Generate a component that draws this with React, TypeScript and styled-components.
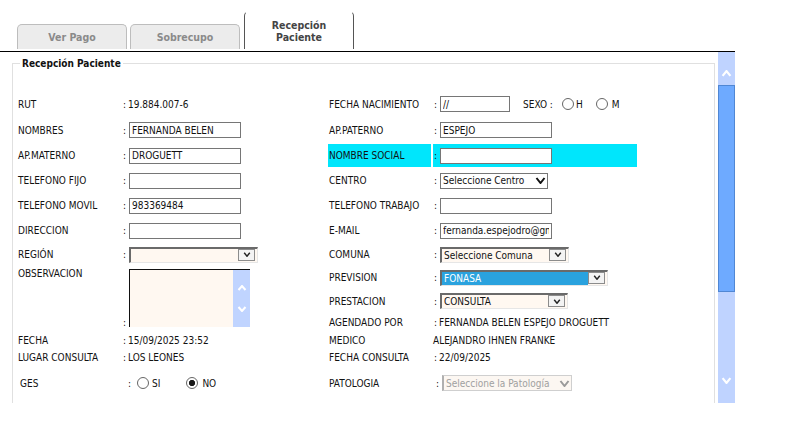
import React from 'react';
import styled, { createGlobalStyle } from 'styled-components';

const GlobalStyle = createGlobalStyle`
  html, body { margin: 0; padding: 0; background: #fff; }
  body {
    font-family: "DejaVu Sans Condensed", "DejaVu Sans", sans-serif;
    font-stretch: condensed;
    font-size: 10px;
    color: #111;
  }
`;

type SelectVariant = 'plain' | 'inset' | 'disabled';

const Chevron: React.FC<{ w: number; h: number; color: string; sw: number }> = ({ w, h, color, sw }) => (
  <svg width={w} height={h} viewBox={`0 0 ${w} ${h}`}>
    <polyline
      points={`${sw / 2 + 0.5},${sw / 2} ${w / 2},${h - sw / 2} ${w - sw / 2 - 0.5},${sw / 2}`}
      fill="none"
      stroke={color}
      strokeWidth={sw}
    />
  </svg>
);

const ChevronUp: React.FC<{ w: number; h: number; color: string; sw: number }> = ({ w, h, color, sw }) => (
  <svg width={w} height={h} viewBox={`0 0 ${w} ${h}`}>
    <polyline
      points={`${sw / 2 + 0.5},${h - sw / 2} ${w / 2},${sw / 2} ${w - sw / 2 - 0.5},${h - sw / 2}`}
      fill="none"
      stroke={color}
      strokeWidth={sw}
    />
  </svg>
);

const Select: React.FC<{ w: number; variant: SelectVariant; text?: string; selected?: boolean }> = ({
  w,
  variant,
  text,
  selected,
}) => (
  <SelectFrame $w={w} $variant={variant}>
    <SelectText $selected={selected}>{text}</SelectText>
    {variant === 'inset' ? (
      <ArrowBox>
        <Chevron w={8} h={5} color="#222" sw={1.4} />
      </ArrowBox>
    ) : (
      <ArrowPlain>
        <Chevron w={11} h={7} color={variant === 'disabled' ? '#9a9a9a' : '#111'} sw={2} />
      </ArrowPlain>
    )}
  </SelectFrame>
);

const App: React.FC = () => {
  return (
    <>
      <GlobalStyle />
      <Page>
        <TabBar>
          <Tab>Ver Pago</Tab>
          <Tab>Sobrecupo</Tab>
          <ActiveTab>
            Recepción
            <br />
            Paciente
          </ActiveTab>
        </TabBar>

        <Body>
          <ContentPane>
            <Fieldset>
              <Legend>Recepción Paciente</Legend>
              <FormGrid>
                <Label>RUT</Label>
                <Value>
                  <Colon $w={6}>:</Colon>19.884.007-6
                </Value>
                <Label $indent={1}>FECHA NACIMIENTO</Label>
                <Value>
                  <Colon>:</Colon>
                  <TextInput $w={70} defaultValue="//" />
                  <SexoGroup>
                    SEXO :
                    <Radio name="sexo" $gap={9} />
                    <RadioText>H</RadioText>
                    <Radio name="sexo" $gap={13} />
                    <RadioText $gap={4}>M</RadioText>
                  </SexoGroup>
                </Value>

                <Label>NOMBRES</Label>
                <Value>
                  <Colon>:</Colon>
                  <TextInput $w={112} defaultValue="FERNANDA BELEN" />
                </Value>
                <Label $indent={1}>AP.PATERNO</Label>
                <Value>
                  <Colon>:</Colon>
                  <TextInput $w={112} defaultValue="ESPEJO" />
                </Value>

                <Label>AP.MATERNO</Label>
                <Value>
                  <Colon>:</Colon>
                  <TextInput $w={112} defaultValue="DROGUETT" />
                </Value>
                <Label $indent={1} $hl>
                  NOMBRE SOCIAL
                </Label>
                <Value $hl>
                  <Colon>:</Colon>
                  <TextInput $w={112} defaultValue="" />
                </Value>

                <Label>TELEFONO FIJO</Label>
                <Value>
                  <Colon>:</Colon>
                  <TextInput $w={112} defaultValue="" />
                </Value>
                <Label $indent={1}>CENTRO</Label>
                <Value>
                  <Colon>:</Colon>
                  <Select w={108} variant="plain" text="Seleccione Centro" />
                </Value>

                <Label>TELEFONO MOVIL</Label>
                <Value>
                  <Colon>:</Colon>
                  <TextInput $w={112} defaultValue="983369484" />
                </Value>
                <Label $indent={1}>TELEFONO TRABAJO</Label>
                <Value>
                  <Colon>:</Colon>
                  <TextInput $w={112} defaultValue="" />
                </Value>

                <Label>DIRECCION</Label>
                <Value>
                  <Colon>:</Colon>
                  <TextInput $w={112} defaultValue="" />
                </Value>
                <Label $indent={1}>E-MAIL</Label>
                <Value>
                  <Colon>:</Colon>
                  <TextInput $w={112} defaultValue="fernanda.espejodro@gmail.com" />
                </Value>

                <Label>REGIÓN</Label>
                <Value>
                  <Colon>:</Colon>
                  <Select w={129} variant="inset" text="" />
                </Value>
                <Label $indent={1}>COMUNA</Label>
                <Value>
                  <Colon>:</Colon>
                  <Select w={129} variant="inset" text="Seleccione Comuna" />
                </Value>

                <Label $span={3} $top>
                  OBSERVACION
                </Label>
                <Value $span={3} $top>
                  <Colon $bottom>:</Colon>
                  <Memo>
                    <MemoArea />
                    <MemoBar>
                      <ChevronUp w={10} h={6} color="#fff" sw={2} />
                      <Chevron w={10} h={6} color="#fff" sw={2} />
                    </MemoBar>
                  </Memo>
                </Value>
                <Label $indent={1}>PREVISION</Label>
                <Value>
                  <Colon>:</Colon>
                  <Select w={168} variant="inset" text="FONASA" selected />
                </Value>

                <Label $indent={1}>PRESTACION</Label>
                <Value>
                  <Colon>:</Colon>
                  <Select w={128} variant="inset" text="CONSULTA" />
                </Value>

                <Label $indent={1}>AGENDADO POR</Label>
                <Value>
                  <Colon $w={6}>:</Colon>FERNANDA BELEN ESPEJO DROGUETT
                </Value>

                <Label>FECHA</Label>
                <Value>
                  <Colon $w={6}>:</Colon>15/09/2025 23:52
                </Value>
                <Label $indent={1}>MEDICO</Label>
                <Value>ALEJANDRO IHNEN FRANKE</Value>

                <Label>LUGAR CONSULTA</Label>
                <Value>
                  <Colon $w={6}>:</Colon>LOS LEONES
                </Value>
                <Label $indent={1}>FECHA CONSULTA</Label>
                <Value>
                  <Colon $w={6}>:</Colon>22/09/2025
                </Value>

                <Label $indent={2}>GES</Label>
                <Value $pad={5}>
                  <Colon $w={10}>:</Colon>
                  <Radio name="ges" />
                  <RadioText $gap={3}>SI</RadioText>
                  <Radio name="ges" $gap={26} defaultChecked />
                  <RadioText $gap={4}>NO</RadioText>
                </Value>
                <Label $indent={1}>PATOLOGIA</Label>
                <Value $pad={2}>
                  <Colon>:</Colon>
                  <Select w={130} variant="disabled" text="Seleccione la Patología" />
                </Value>
              </FormGrid>
            </Fieldset>
          </ContentPane>

          <ScrollBar>
            <ScrollEnd $down={false}>
              <ChevronUp w={11} h={7} color="#fff" sw={2.2} />
            </ScrollEnd>
            <ScrollThumb />
            <ScrollTrack />
            <ScrollEnd $down>
              <Chevron w={11} h={7} color="#fff" sw={2.2} />
            </ScrollEnd>
          </ScrollBar>
        </Body>
      </Page>
    </>
  );
};

export default App;

// --- styled components ---

const Page = styled.div`
  width: 735px;
`;

const TabBar = styled.div`
  display: flex;
  align-items: flex-end;
  gap: 3px;
  height: 49px;
  padding: 0 0 2px 17px;
  border-bottom: 1px solid #000;
`;

const Tab = styled.div`
  width: 110px;
  height: 25px;
  box-sizing: border-box;
  border: 1px solid #bdbdbd;
  border-bottom: none;
  border-radius: 5px 5px 0 0;
  background: #ececec;
  color: #8a8a8a;
  font-weight: bold;
  font-size: 10.5px;
  display: flex;
  align-items: center;
  justify-content: center;
`;

const ActiveTab = styled.div`
  width: 110px;
  height: 38px;
  margin-left: 1px;
  box-sizing: border-box;
  border: 1px solid #555;
  border-top-color: transparent;
  border-bottom: none;
  border-radius: 5px 5px 0 0;
  background: #fff;
  color: #444;
  font-weight: bold;
  font-size: 10.5px;
  line-height: 12px;
  text-align: center;
  padding-top: 7px;
`;

const Body = styled.div`
  display: flex;
  height: 351px;
`;

const ContentPane = styled.div`
  width: 718px;
  height: 100%;
  overflow: hidden;
`;

const Fieldset = styled.fieldset`
  margin: 6px 3px 0 12px;
  padding: 0 0 0 5px;
  border: 1px solid #e0e0e0;
  min-height: 420px;
`;

const Legend = styled.legend`
  font-weight: bold;
  padding: 0 2px;
  margin-left: 2px;
  color: #111;
`;

const FormGrid = styled.div`
  display: grid;
  grid-template-columns: 104px 206px 105px 204px;
  grid-template-rows: 26px 26px 25px 25px 25px 25px 23px 23px 24px 19px 17px 17px 34px;
  padding-top: 22px;
  white-space: nowrap;
`;

const Label = styled.div<{ $indent?: number; $hl?: boolean; $span?: number; $top?: boolean }>`
  display: flex;
  align-items: ${(p) => (p.$top ? 'flex-start' : 'center')};
  padding-left: ${(p) => p.$indent ?? 0}px;
  padding-top: ${(p) => (p.$top ? 2 : 0)}px;
  background: ${(p) => (p.$hl ? '#00e6fc' : 'transparent')};
  margin: ${(p) => (p.$hl ? '1px 2px 1px 0' : '0')};
  grid-row: ${(p) => (p.$span ? `span ${p.$span}` : 'auto')};
`;

const Value = styled.div<{ $hl?: boolean; $span?: number; $top?: boolean; $pad?: number }>`
  display: flex;
  align-items: ${(p) => (p.$top ? 'flex-start' : 'center')};
  padding-left: ${(p) => p.$pad ?? 0}px;
  background: ${(p) => (p.$hl ? '#00e6fc' : 'transparent')};
  margin: ${(p) => (p.$hl ? '1px 0' : '0')};
  grid-row: ${(p) => (p.$span ? `span ${p.$span}` : 'auto')};
`;

const Colon = styled.span<{ $w?: number; $bottom?: boolean }>`
  flex: none;
  width: ${(p) => p.$w ?? 7}px;
  padding-left: 1px;
  box-sizing: border-box;
  align-self: ${(p) => (p.$bottom ? 'flex-end' : 'auto')};
  margin-bottom: ${(p) => (p.$bottom ? 4 : 0)}px;
`;

const TextInput = styled.input<{ $w: number }>`
  width: ${(p) => p.$w}px;
  height: 16px;
  box-sizing: border-box;
  margin: 0;
  padding: 0 2px;
  border: 1px solid #767676;
  background: #fff;
  font: inherit;
  color: #111;
  outline: none;
`;

const SexoGroup = styled.div`
  display: flex;
  align-items: center;
  margin-left: 13px;
`;

const Radio = styled.input.attrs({ type: 'radio' })<{ $gap?: number }>`
  appearance: none;
  width: 12px;
  height: 12px;
  margin: 0 0 0 ${(p) => p.$gap ?? 0}px;
  border: 1px solid #666;
  border-radius: 50%;
  background: #fff;
  &:checked {
    background: radial-gradient(circle, #1a1a1a 0 2.8px, #fff 3.4px);
  }
`;

const RadioText = styled.span<{ $gap?: number }>`
  margin-left: ${(p) => p.$gap ?? 2}px;
`;

const SelectFrame = styled.div<{ $w: number; $variant: SelectVariant }>`
  width: ${(p) => p.$w}px;
  height: 16px;
  box-sizing: border-box;
  display: flex;
  align-items: stretch;
  ${(p) =>
    p.$variant === 'plain'
      ? `border: 1px solid #767676; background: #fff; color: #111;`
      : p.$variant === 'inset'
        ? `border-top: 2px solid #6a6a6a; border-left: 2px solid #6a6a6a;
           border-right: 1px solid #e6e6e6; border-bottom: 1px solid #e6e6e6;
           background: #fff8f1; color: #111;`
        : `border: 1px solid #cfcfcf; border-left: 2px solid #b0b0b0;
           background: #fcf7f2; color: #a0a0a0;`}
`;

const SelectText = styled.span<{ $selected?: boolean }>`
  flex: 1;
  min-width: 0;
  display: flex;
  align-items: center;
  padding-left: 2px;
  overflow: hidden;
  background: ${(p) => (p.$selected ? '#2aa2de' : 'transparent')};
  color: ${(p) => (p.$selected ? '#fff' : 'inherit')};
`;

const ArrowBox = styled.span`
  flex: none;
  width: 17px;
  margin: 0 2px 1px 0;
  box-sizing: border-box;
  border: 1px solid #8c8c8c;
  background: #f3f3f3;
  display: flex;
  align-items: center;
  justify-content: center;
`;

const ArrowPlain = styled.span`
  flex: none;
  width: 14px;
  display: flex;
  align-items: center;
  justify-content: center;
`;

const Memo = styled.div`
  width: 121px;
  height: 58px;
  margin-top: 3px;
  box-sizing: border-box;
  display: flex;
  border-top: 1px solid #111;
  border-left: 1px solid #111;
`;

const MemoArea = styled.div`
  flex: 1;
  background: #fff8f1;
`;

const MemoBar = styled.div`
  width: 17px;
  background: #c0d4ff;
  display: flex;
  flex-direction: column;
  align-items: center;
  justify-content: center;
  gap: 15px;
`;

const ScrollBar = styled.div`
  width: 17px;
  display: flex;
  flex-direction: column;
  background: #bfd3ff;
`;

const ScrollEnd = styled.div<{ $down: boolean }>`
  display: flex;
  justify-content: center;
  box-sizing: border-box;
  ${(p) =>
    p.$down
      ? `margin-top: auto; height: 29px; align-items: flex-start; padding-top: 3px;`
      : `height: 33px; align-items: flex-end; padding-bottom: 8px;`}
`;

const ScrollThumb = styled.div`
  height: 207px;
  box-sizing: border-box;
  background: #6eaaff;
  border: 1px solid #5087d4;
`;

const ScrollTrack = styled.div`
  flex: 1;
`;
